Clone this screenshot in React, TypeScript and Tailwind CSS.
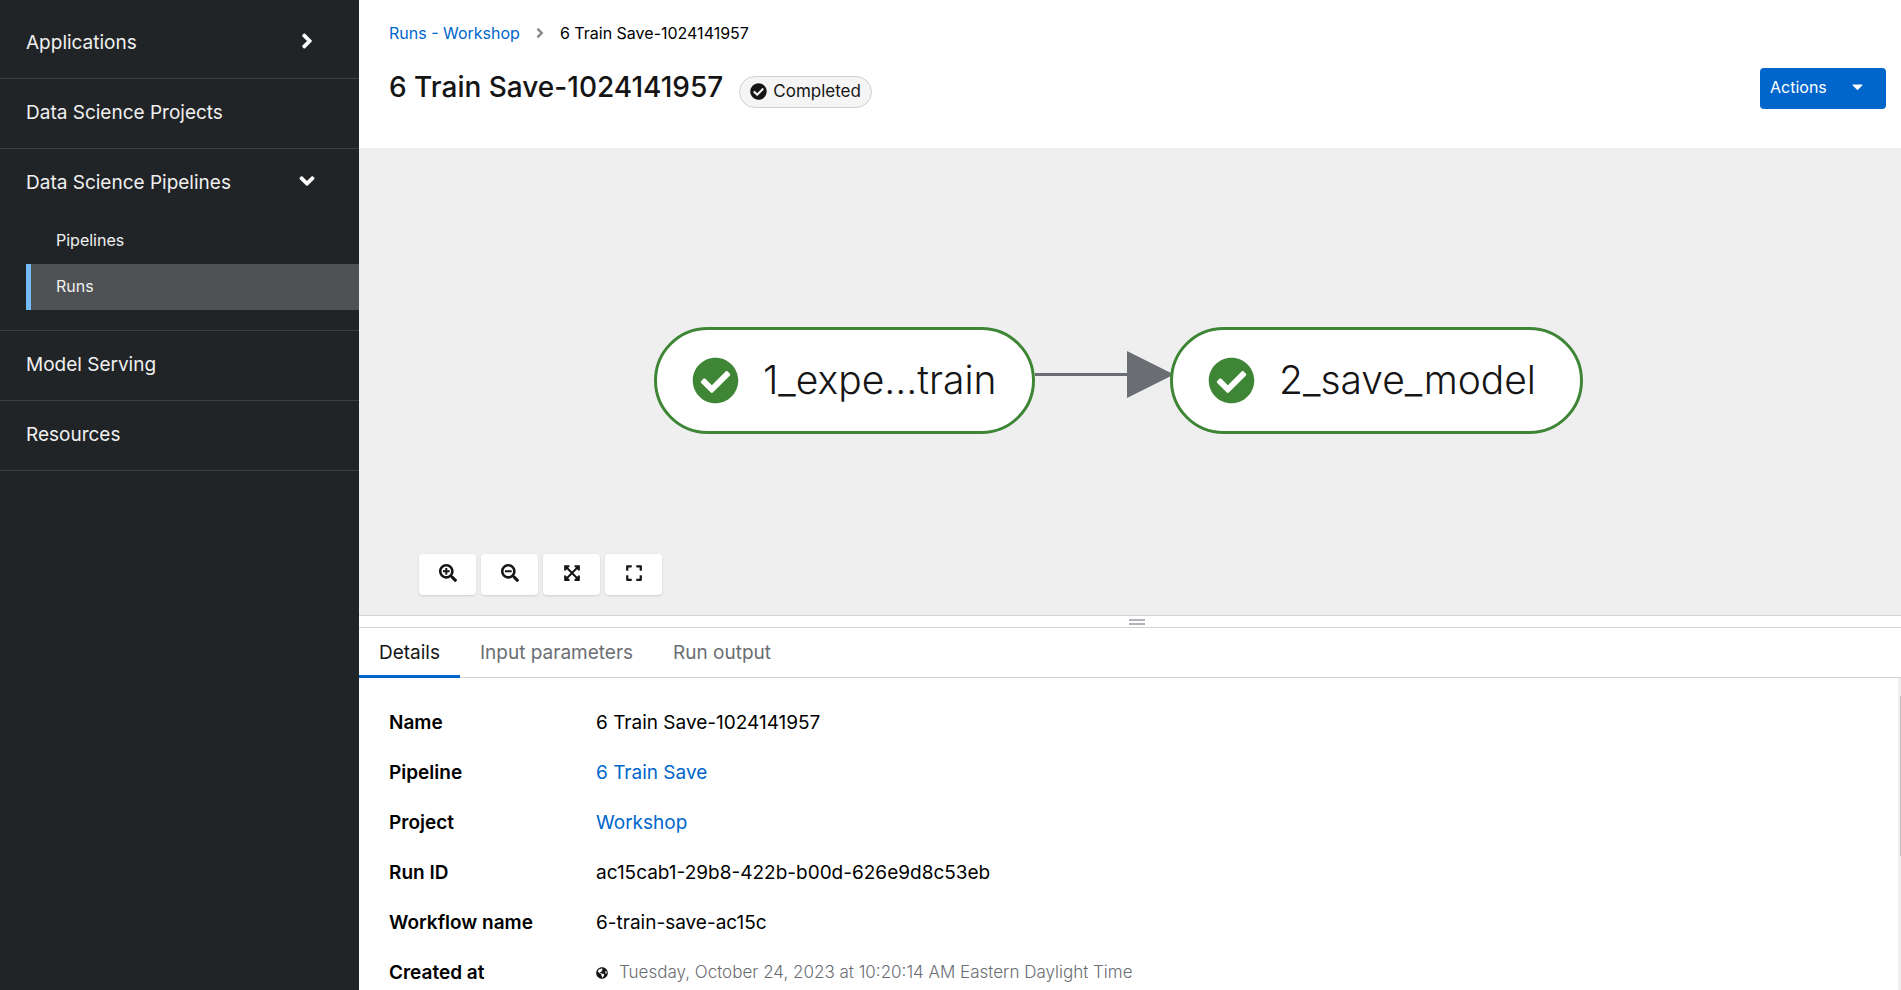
import type { ReactNode } from "react";
import {
  FaAngleDown,
  FaAngleRight,
  FaCaretDown,
  FaCheckCircle,
  FaExpand,
  FaExpandArrowsAlt,
  FaGlobeAmericas,
  FaSearchMinus,
  FaSearchPlus,
} from "react-icons/fa";

const RUN_NAME = "6 Train Save-1024141957";

function NavItem({ label, icon }: { label: string; icon?: ReactNode }) {
  return (
    <a href="#" className="flex h-[69px] items-center justify-between pr-10 pl-[26px] text-[19px]">
      {label}
      {icon}
    </a>
  );
}

function Sidebar() {
  return (
    <nav aria-label="Main" className="w-[359px] shrink-0 bg-[#212427] pt-[9px] text-[#f0f0f0]">
      <ul>
        <li className="border-b border-[#3c3f42]">
          <NavItem label="Applications" icon={<FaAngleRight className="mb-1.5 size-6 text-white" />} />
        </li>
        <li className="border-b border-[#3c3f42]">
          <NavItem label="Data Science Projects" />
        </li>
        <li className="border-b border-[#3c3f42] pb-5">
          <NavItem label="Data Science Pipelines" icon={<FaAngleDown className="mb-1.5 size-6 text-white" />} />
          <ul className="ml-[26px] text-[16px]">
            <li>
              <a href="#" className="flex h-[46px] items-center border-l-[5px] border-transparent pb-0.5 pl-[25px]">
                Pipelines
              </a>
            </li>
            <li>
              <a
                href="#"
                aria-current="page"
                className="flex h-[46px] items-center border-l-[5px] border-[#73bcf7] bg-[#4f5255] pb-0.5 pl-[25px]"
              >
                Runs
              </a>
            </li>
          </ul>
        </li>
        <li className="border-b border-[#3c3f42]">
          <NavItem label="Model Serving" />
        </li>
        <li className="border-b border-[#3c3f42]">
          <NavItem label="Resources" />
        </li>
      </ul>
    </nav>
  );
}

function Header() {
  return (
    <header className="flex h-[148px] shrink-0 items-start justify-between pr-[15px] pl-[30px]">
      <div>
        <nav aria-label="Breadcrumb" className="flex items-center pt-[21px] text-[16px] leading-6">
          <a href="#" className="text-[#0066cc]">
            Runs - Workshop
          </a>
          <FaAngleRight className="mx-3 size-4 text-[#8a8d90]" />
          <span className="text-black">{RUN_NAME}</span>
        </nav>
        <div className="flex items-center gap-4 pt-[21px]">
          <h1 className="text-[28px] leading-9 font-medium text-[#151515]">{RUN_NAME}</h1>
          <span className="mt-2.5 flex h-8 items-center gap-1.5 rounded-full border border-[#d2d2d2] bg-[#f5f5f5] px-2.5 text-[17px] text-[#151515]">
            <FaCheckCircle className="mb-0.5 size-[17px]" />
            Completed
          </span>
        </div>
      </div>
      <button
        type="button"
        className="mt-[68px] flex h-[41px] w-[126px] items-center justify-between rounded bg-[#0066cc] pr-5 pb-1 pl-2.5 text-[16px] text-white"
      >
        Actions
        <FaCaretDown className="size-[17px]" />
      </button>
    </header>
  );
}

function TaskNode({ label, className }: { label: string; className: string }) {
  return (
    <div
      className={
        "flex h-[107px] items-center gap-6 rounded-full border-[3px] border-[#3e8635] bg-white pl-[35px] text-[39px] font-light whitespace-nowrap text-[#151515] " +
        className
      }
    >
      <FaCheckCircle className="size-[47px] shrink-0 text-[#3e8635]" />
      {label}
    </div>
  );
}

const controls = [
  { label: "Zoom in", icon: <FaSearchPlus /> },
  { label: "Zoom out", icon: <FaSearchMinus /> },
  { label: "Fit to screen", icon: <FaExpandArrowsAlt /> },
  { label: "Reset view", icon: <FaExpand /> },
];

function Topology() {
  return (
    <section aria-label="Pipeline graph" className="relative min-h-0 flex-1 bg-[#efefef]">
      <div className="absolute top-[179px] left-[295px] flex">
        <TaskNode label="1_expe...train" className="w-[381px]" />
        <svg width="135" height="107" viewBox="0 0 135 107" className="overflow-visible" aria-hidden="true">
          <path d="M0 47.5H94" stroke="#6a6e73" strokeWidth="3" />
          <path d="M92 24L139 47.5L92 71Z" fill="#6a6e73" />
        </svg>
        <TaskNode label="2_save_model" className="z-10 w-[413px]" />
      </div>
      <div className="absolute bottom-5 left-[60px] flex gap-[5px]">
        {controls.map((c) => (
          <button
            key={c.label}
            type="button"
            aria-label={c.label}
            className="flex h-[41px] w-[57px] items-center justify-center rounded bg-white pb-1 text-[18px] text-[#151515] shadow-sm"
          >
            {c.icon}
          </button>
        ))}
      </div>
    </section>
  );
}

function Link({ children }: { children: ReactNode }) {
  return (
    <a href="#" className="text-[#0066cc]">
      {children}
    </a>
  );
}

const details: { term: string; value: ReactNode }[] = [
  { term: "Name", value: RUN_NAME },
  { term: "Pipeline", value: <Link>6 Train Save</Link> },
  { term: "Project", value: <Link>Workshop</Link> },
  { term: "Run ID", value: "ac15cab1-29b8-422b-b00d-626e9d8c53eb" },
  { term: "Workflow name", value: "6-train-save-ac15c" },
  {
    term: "Created at",
    value: (
      <span className="flex items-center gap-[11px] text-[17px] font-light text-[#6a6e73]">
        <FaGlobeAmericas className="size-3 text-[#151515]" />
        Tuesday, October 24, 2023 at 10:20:14 AM Eastern Daylight Time
      </span>
    ),
  },
];

function Drawer() {
  return (
    <section aria-label="Run details" className="flex h-[375px] shrink-0 flex-col">
      <div
        role="separator"
        aria-orientation="horizontal"
        className="flex h-[13px] shrink-0 flex-col items-center justify-center gap-0.5 border-y border-[#d2d2d2] pl-[14px]"
      >
        <span className="h-0.5 w-4 bg-[#b0b4b8]" />
        <span className="h-0.5 w-4 bg-[#b0b4b8]" />
      </div>
      <div role="tablist" className="flex h-[50px] shrink-0 border-b border-[#d2d2d2] text-[19px] text-[#6a6e73]">
        <button
          type="button"
          role="tab"
          aria-selected="true"
          className="-mb-px border-b-[3px] border-[#0066cc] px-5 pt-1 text-[#151515]"
        >
          Details
        </button>
        <button type="button" role="tab" aria-selected="false" className="px-5 pt-0.5">
          Input parameters
        </button>
        <button type="button" role="tab" aria-selected="false" className="px-5 pt-0.5">
          Run output
        </button>
      </div>
      <div className="flex min-h-0 flex-1">
        <dl className="flex-1 overflow-hidden pt-5 pl-[30px] text-[19px] text-black">
          {details.map((d) => (
            <div key={d.term} className="flex h-[50px] items-center">
              <dt className="w-[207px] shrink-0 font-semibold">{d.term}</dt>
              <dd>{d.value}</dd>
            </div>
          ))}
        </dl>
        <div aria-hidden="true" className="flex w-[3px] justify-end bg-[#efefef] pt-[18px]">
          <span className="h-40 w-px bg-[#c1c1c1]" />
        </div>
      </div>
    </section>
  );
}

export default function App() {
  return (
    <div className="flex h-screen overflow-hidden bg-white font-['Inter',sans-serif]">
      <Sidebar />
      <main className="flex min-w-0 flex-1 flex-col">
        <Header />
        <Topology />
        <Drawer />
      </main>
    </div>
  );
}
